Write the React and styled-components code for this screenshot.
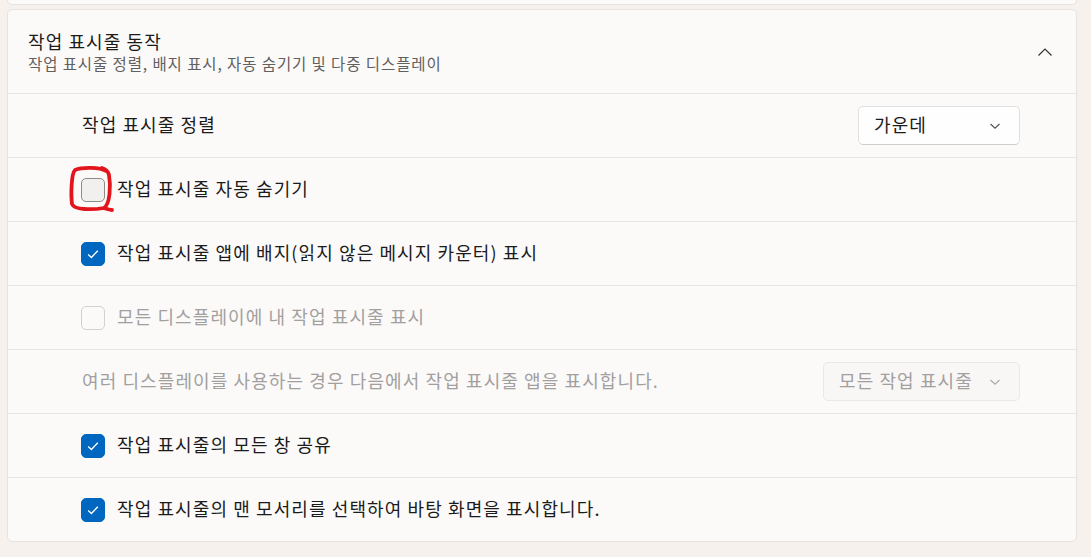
import React from "react";
import styled, { createGlobalStyle } from "styled-components";

const GlobalStyle = createGlobalStyle`
  body {
    margin: 0;
    background: #f7f1ed;
    font-family: "Noto Sans CJK KR", "Noto Sans", sans-serif;
    color: #1b1b1b;
  }
`;

const Page = styled.div`
  width: 1070px;
  padding-left: 7px;
  height: 557px;
  overflow: hidden;
`;

const PrevCard = styled.div`
  height: 4px;
  background: #fbfaf9;
  border: 1px solid #e6e3e1;
  border-top: none;
  border-radius: 0 0 5px 5px;
  margin-bottom: 4px;
`;

const Card = styled.section`
  background: #fbfaf9;
  border: 1px solid #e6e3e1;
  border-radius: 5px;
`;

const Header = styled.div`
  height: 83px;
  display: flex;
  align-items: center;
  justify-content: space-between;
  padding: 0 23px 0 20px;
`;

const Titles = styled.div`
  display: flex;
  flex-direction: column;
  margin-bottom: 2px;
`;

const Title = styled.div`
  font-size: 18px;
  line-height: 24px;
  letter-spacing: 1.1px;
`;

const Subtitle = styled.div`
  font-size: 15.5px;
  line-height: 20px;
  letter-spacing: 0.9px;
  color: #62605f;
`;

const Row = styled.div`
  height: 63px;
  border-top: 1px solid #e8e6e4;
  display: flex;
  align-items: center;
  justify-content: space-between;
  padding: 0 56px 0 74px;
  font-size: 18px;
  letter-spacing: 1.1px;
  color: ${(p) => (p.$disabled ? "#a2a09f" : "#1b1b1b")};
`;

const Text = styled.span`
  line-height: 24px;
  margin-bottom: 3px;
`;

const CheckLabel = styled.label`
  display: flex;
  align-items: center;
  gap: 12px;
  margin-left: -1px;
  position: relative;
`;

const Box = styled.span`
  width: 24px;
  height: 24px;
  box-sizing: border-box;
  border-radius: 5px;
  display: flex;
  align-items: center;
  justify-content: center;
  background: ${(p) => (p.$checked ? "#0067c0" : p.$disabled ? "transparent" : "#f1f0ef")};
  border: 1px solid ${(p) => (p.$checked ? "#0067c0" : p.$disabled ? "#d3d1d0" : "#8d8b8a")};
`;

const Select = styled.div`
  height: 39px;
  width: ${(p) => p.$w}px;
  box-sizing: border-box;
  border-radius: 5px;
  border: 1px solid ${(p) => (p.$disabled ? "#ebe9e8" : "#e2e0df")};
  border-bottom-color: ${(p) => (p.$disabled ? "#ebe9e8" : "#d0cecd")};
  background: ${(p) => (p.$disabled ? "#f8f7f6" : "#fefefe")};
  color: ${(p) => (p.$disabled ? "#a2a09f" : "#1b1b1b")};
  display: flex;
  align-items: center;
  justify-content: space-between;
  padding: 0 18px 0 15px;
  font-size: 18px;
`;

const Mark = styled.svg`
  position: absolute;
  left: -12px;
  top: -11px;
  pointer-events: none;
`;

const Chevron = ({ up, color = "#555" }) =>
  up ? (
    <svg width="16" height="10" viewBox="0 0 16 10">
      <path d="M1.5 8.5 L8 2 L14.5 8.5" fill="none" stroke="#333" strokeWidth="1.2" />
    </svg>
  ) : (
    <svg width="12" height="8" viewBox="0 0 12 8">
      <path d="M1.5 2 L6 6.2 L10.5 2" fill="none" stroke={color} strokeWidth="1.2" />
    </svg>
  );

const Check = ({ checked, disabled, marked, children }) => (
  <CheckLabel>
    <Box $checked={checked} $disabled={disabled}>
      {checked && (
        <svg width="16" height="16" viewBox="0 0 16 16">
          <path d="M3.2 8.4 L6.4 11.4 L12.8 4.8" fill="none" stroke="#fff" strokeWidth="1.4" />
        </svg>
      )}
    </Box>
    <Text>{children}</Text>
    {marked && (
      <Mark width="48" height="50" viewBox="0 0 48 50">
        <path
          d="M37 6 C31 2, 13 2, 6 5 C2 9, 2 31, 3 39 C5 45, 23 45, 35 43 C41 39, 42 21, 40 10 C39 6, 37 4, 33 3 M35 43 C38 44, 41 45, 43 45"
          fill="none"
          stroke="#e2141c"
          strokeWidth="3.8"
          strokeLinecap="round"
        />
      </Mark>
    )}
  </CheckLabel>
);

export default function App() {
  return (
    <Page>
      <GlobalStyle />
      <PrevCard />
      <Card>
        <Header>
          <Titles>
            <Title>작업 표시줄 동작</Title>
            <Subtitle>작업 표시줄 정렬, 배지 표시, 자동 숨기기 및 다중 디스플레이</Subtitle>
          </Titles>
          <Chevron up />
        </Header>
        <Row>
          <Text>작업 표시줄 정렬</Text>
          <Select $w={162}>
            <Text>가운데</Text>
            <Chevron />
          </Select>
        </Row>
        <Row>
          <Check marked>작업 표시줄 자동 숨기기</Check>
        </Row>
        <Row>
          <Check checked>작업 표시줄 앱에 배지(읽지 않은 메시지 카운터) 표시</Check>
        </Row>
        <Row $disabled>
          <Check disabled>모든 디스플레이에 내 작업 표시줄 표시</Check>
        </Row>
        <Row $disabled>
          <Text>여러 디스플레이를 사용하는 경우 다음에서 작업 표시줄 앱을 표시합니다.</Text>
          <Select $w={197} $disabled>
            <Text>모든 작업 표시줄</Text>
            <Chevron color="#aaa" />
          </Select>
        </Row>
        <Row>
          <Check checked>작업 표시줄의 모든 창 공유</Check>
        </Row>
        <Row>
          <Check checked>작업 표시줄의 맨 모서리를 선택하여 바탕 화면을 표시합니다.</Check>
        </Row>
      </Card>
    </Page>
  );
}
